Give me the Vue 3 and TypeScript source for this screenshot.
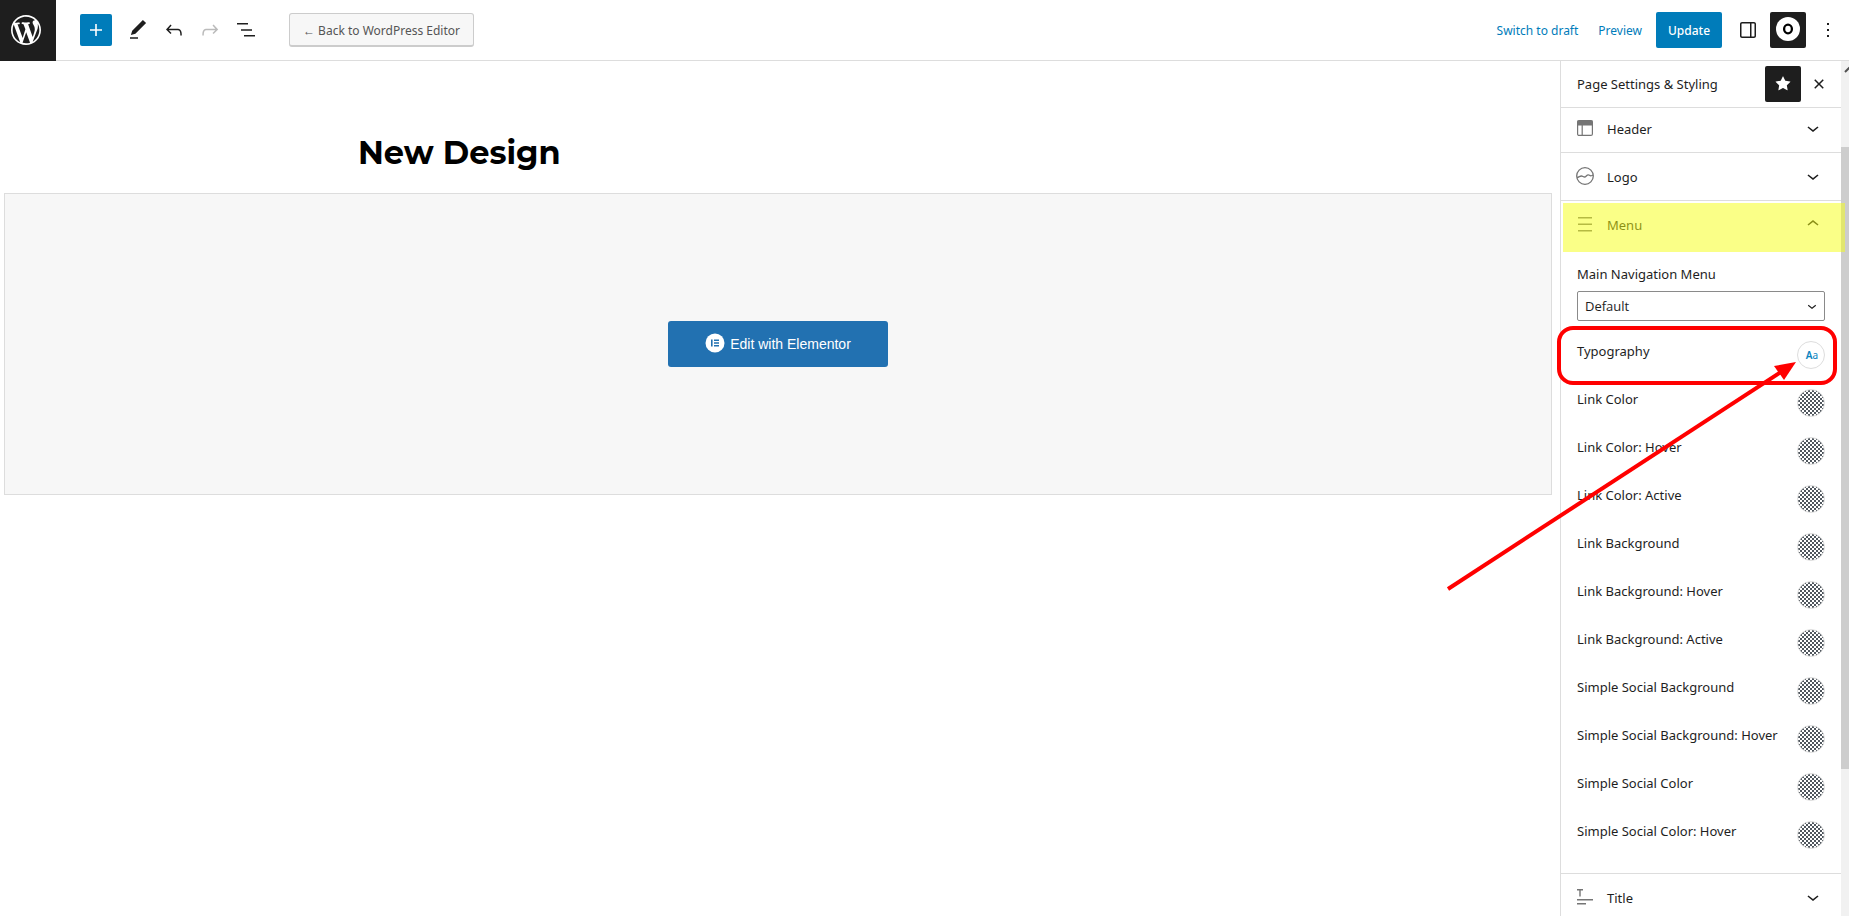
<script setup lang="ts">
interface ToolIcon {
  label: string
  path: string
  muted?: boolean
}

const tools: ToolIcon[] = [
  { label: 'Tools', path: 'M20.1 5.1L16.9 2 6.2 12.7l-1.3 4.4 4.5-1.3L20.1 5.1zM4 20.8h8v-1.5H4v1.5z' },
  { label: 'Undo', path: 'M18.3 11.7c-.6-.6-1.4-.9-2.3-.9H6.7l2.9-3.3-1.1-1-4.5 5L8.5 16l1-1-2.7-2.7H16c.5 0 .9.2 1.3.5 1 1 1 3.4 1 4.5v.3h1.5v-.2c0-1.5 0-4.3-1.5-5.7z' },
  { label: 'Redo', muted: true, path: 'M15.6 6.5l-1.1 1 2.9 3.3H8c-.9 0-1.7.3-2.3.9-1.4 1.5-1.4 4.2-1.4 5.6v.2h1.5v-.3c0-1.1 0-3.5 1-4.5.3-.3.7-.5 1.3-.5h9.2L14.5 15l1.1 1.1 4.6-4.6-4.6-5z' },
  { label: 'List view', path: 'M3 5h11v1.6H3V5Zm4 6.2h11v1.6H7v-1.6ZM21 17H10v1.6h11V17Z' },
]

const chevronDown = 'M17.5 11.6L12 16l-5.5-4.4.9-1.2L12 14l4.5-3.6 1 1.2z'
const chevronUp = 'M6.5 12.4L12 8l5.5 4.4-.9 1.2L12 10l-4.5 3.6-1-1.2z'

const colors: string[] = [
  'Link Color',
  'Link Color: Hover',
  'Link Color: Active',
  'Link Background',
  'Link Background: Hover',
  'Link Background: Active',
  'Simple Social Background',
  'Simple Social Background: Hover',
  'Simple Social Color',
  'Simple Social Color: Hover',
]
</script>

<template>
  <div class="app">
    <header class="topbar">
      <a class="wp" href="#" aria-label="View Pages">
        <svg width="36" height="36" viewBox="-2 -2 24 24"><path d="M20 10c0-5.51-4.49-10-10-10C4.48 0 0 4.49 0 10c0 5.52 4.48 10 10 10 5.51 0 10-4.48 10-10zM7.78 15.37L4.37 6.22c.55-.02 1.17-.08 1.17-.08.5-.06.44-1.13-.06-1.11 0 0-1.45.11-2.37.11-.18 0-.37 0-.58-.01C4.12 2.69 6.87 1.11 10 1.11c2.33 0 4.45.87 6.05 2.34-.68-.11-1.65.39-1.65 1.58 0 .74.45 1.36.9 2.1.35.61.55 1.36.55 2.46 0 1.49-1.4 5-1.4 5l-3.03-8.37c.54-.02.82-.17.82-.17.5-.05.44-1.25-.06-1.22 0 0-1.44.12-2.38.12-.87 0-2.33-.12-2.33-.12-.5-.03-.56 1.2-.06 1.22l.92.08 1.26 3.41zM17.41 10c.24-.64.74-1.87.43-4.25.7 1.29 1.05 2.71 1.05 4.25 0 3.29-1.73 6.24-4.4 7.78.97-2.59 1.94-5.2 2.92-7.78zM6.1 18.09C3.12 16.65 1.11 13.53 1.11 10c0-1.3.23-2.48.72-3.59C3.25 10.3 4.67 14.2 6.1 18.09zm4.03-6.63l2.58 6.98c-.86.29-1.76.45-2.71.45-.79 0-1.57-.11-2.29-.33.81-2.38 1.62-4.74 2.42-7.1z" /></svg>
      </a>
      <div class="tools">
        <button class="add" type="button" aria-label="Add block">
          <svg width="24" height="24" viewBox="0 0 24 24"><path d="M18 11.2h-5.2V6h-1.6v5.2H6v1.6h5.2V18h1.6v-5.2H18z" /></svg>
        </button>
        <button v-for="tool in tools" :key="tool.label" class="tool" :class="{ muted: tool.muted }" type="button" :aria-label="tool.label">
          <svg width="24" height="24" viewBox="0 0 24 24"><path :d="tool.path" /></svg>
        </button>
      </div>
      <button class="back" type="button">← Back to WordPress Editor</button>
      <div class="actions">
        <button class="link" type="button">Switch to draft</button>
        <button class="link" type="button">Preview</button>
        <button class="update" type="button">Update</button>
        <button class="square" type="button" aria-label="Settings">
          <svg width="24" height="24" viewBox="0 0 24 24"><path d="M18 4H6c-1.1 0-2 .9-2 2v12c0 1.1.9 2 2 2h12c1.1 0 2-.9 2-2V6c0-1.1-.9-2-2-2zm-4 14.5H6c-.3 0-.5-.2-.5-.5V6c0-.3.2-.5.5-.5h8v13zm4.5-.5c0 .3-.2.5-.5.5h-2.5v-13H18c.3 0 .5.2.5.5v12z" /></svg>
        </button>
        <button class="square dark" type="button" aria-label="Page Settings and Styling">
          <svg width="24" height="26" viewBox="0 0 24 26"><circle cx="12" cy="12" r="12" fill="#fff" /><ellipse cx="12" cy="12" rx="3.9" ry="4.3" fill="none" stroke="#000" stroke-width="2.3" /></svg>
        </button>
        <button class="more" type="button" aria-label="Options">
          <svg width="24" height="24" viewBox="0 0 24 24"><path d="M13 19h-2v-2h2v2zm0-6h-2v-2h2v2zm0-6h-2V5h2v2z" /></svg>
        </button>
      </div>
    </header>

    <div class="body">
      <main class="canvas">
        <h1 class="title">New Design</h1>
        <div class="block">
          <button class="elementor" type="button">
            <svg width="20" height="22" viewBox="0 0 20 22"><circle cx="10" cy="10" r="9.5" fill="#fff" /><path d="M6 6.4h1.6v7.2H6zM9 6.4h5v1.5H9zM9 9.2h5v1.5H9zM9 12.1h5v1.5H9z" fill="#2271b1" /></svg>
            <span>Edit with Elementor</span>
          </button>
        </div>
      </main>

      <aside class="sidebar">
        <div class="panel">
          <div class="panel-head">
            <strong>Page Settings &amp; Styling</strong>
            <button class="square dark" type="button" aria-label="Pinned">
              <svg width="18" height="18" viewBox="3 3 18 18"><path d="M11.776 4.454a.25.25 0 01.448 0l2.069 4.192a.25.25 0 00.188.137l4.626.672a.25.25 0 01.139.426l-3.348 3.263a.25.25 0 00-.072.222l.79 4.607a.25.25 0 01-.362.263l-4.138-2.175a.25.25 0 00-.232 0l-4.138 2.175a.25.25 0 01-.363-.263l.79-4.607a.25.25 0 00-.071-.222L4.754 9.881a.25.25 0 01.139-.426l4.626-.672a.25.25 0 00.188-.137l2.069-4.192z" /></svg>
            </button>
            <button class="close" type="button" aria-label="Close">
              <svg width="24" height="24" viewBox="0 0 24 24"><path d="M12 13.06l3.712 3.713 1.061-1.06L13.061 12l3.712-3.712-1.06-1.06L12 10.938 8.288 7.227l-1.061 1.06L10.939 12l-3.712 3.712 1.06 1.061L12 13.061z" /></svg>
            </button>
          </div>
          <div class="sections">
            <button class="section scrolled" type="button">
              <svg width="18" height="20" viewBox="0 0 18 20"><rect x="1.6" y="1.6" width="14.8" height="14.8" rx="1.5" fill="none" stroke="#757575" stroke-width="1.2" /><path d="M1.5 1.5h15v5h-15zM5.6 6h1.2v10H5.6z" fill="#757575" /></svg>
              <span>Header</span>
              <svg width="24" height="26" viewBox="0 0 24 26"><path :d="chevronDown" /></svg>
            </button>
            <button class="section" type="button">
              <svg width="18" height="20" viewBox="0 0 18 20"><g fill="none" stroke="#757575" stroke-width="1.3"><circle cx="9" cy="9" r="8.3" /><path d="M1 10.6c2-.4 3-1.6 4.4-1.6 1.4 0 1.8 1 3.2 1s2-2.2 3.6-2.2c1.2 0 1.4 1 2.6 1 .9 0 1.4-.5 2.2-.6" /></g></svg>
              <span>Logo</span>
              <svg width="24" height="26" viewBox="0 0 24 26"><path :d="chevronDown" /></svg>
            </button>
            <div class="open">
              <button class="section" type="button" aria-expanded="true">
                <svg width="18" height="20" viewBox="0 0 18 20"><path d="M2 2h14v1.5H2zM2 8.500h14V10H2zM2 15h14v1.500H2z" fill="#757575" /></svg>
                <span>Menu</span>
                <svg width="24" height="26" viewBox="0 0 24 26"><path :d="chevronUp" /></svg>
              </button>
              <div class="controls">
                <label for="main-menu">Main Navigation Menu</label>
                <div class="select">
                  <select id="main-menu"><option>Default</option></select>
                  <svg width="18" height="18" viewBox="0 0 24 24"><path :d="chevronDown" /></svg>
                </div>
                <div class="row">
                  <span id="typography">Typography</span>
                  <button class="swatch type" type="button" aria-labelledby="typography"><b>A</b>a</button>
                </div>
                <div v-for="(name, i) in colors" :key="name" class="row">
                  <span :id="`color-${i}`">{{ name }}</span>
                  <button class="swatch checker" type="button" :aria-labelledby="`color-${i}`"></button>
                </div>
              </div>
            </div>
            <button class="section" type="button">
              <svg width="18" height="20" viewBox="0 0 18 20"><path d="M1 1h6v1.5H4.700v6H3.300v-6H1zM1 11h16v1.500H1zM1 15h9v1.500H1z" fill="#757575" /></svg>
              <span>Title</span>
              <svg width="24" height="26" viewBox="0 0 24 26"><path :d="chevronDown" /></svg>
            </button>
          </div>
        </div>
        <div class="scrollbar">
          <svg width="8" height="14" viewBox="0 0 8 14"><path d="M4 11l4.500-4.500" fill="none" stroke="#505050" stroke-width="2" /></svg>
          <div class="thumb"></div>
        </div>

        <div class="highlight"></div>
        <svg class="arrow" width="352" height="232" viewBox="0 0 352 232">
          <path d="M2 229L338 10" stroke="#f00" stroke-width="4" />
          <path d="M350 2L328 6l10 14z" fill="#f00" />
        </svg>
        <div class="callout"></div>
      </aside>
    </div>
  </div>
</template>

<style>
body {
  margin: 0;
}
</style>

<style scoped>
.app {
  display: flex;
  flex-direction: column;
  height: 100vh;
  overflow: hidden;
  background: #fff;
  color: #1e1e1e;
  font: 13px/20px "Noto Sans", "Open Sans", sans-serif;
}
.app * {
  box-sizing: border-box;
}
button,
select {
  margin: 0;
  padding: 0;
  border: 0;
  background: none;
  color: inherit;
  font: inherit;
}
svg {
  display: block;
  flex: none;
  fill: currentColor;
}
.topbar {
  display: flex;
  flex: none;
  align-items: center;
  height: 61px;
  border-bottom: 1px solid #ddd;
  font-size: 12px;
}
.wp {
  display: flex;
  align-items: center;
  justify-content: center;
  width: 56px;
  height: 61px;
  padding-right: 4px;
  background: #1e1e1e;
  color: #fff;
}
.tools {
  display: flex;
  align-items: center;
  margin-left: 24px;
}
.add {
  display: flex;
  align-items: center;
  justify-content: center;
  width: 32px;
  height: 32px;
  margin-right: 8px;
  border-radius: 2px;
  background: #007cba;
  color: #fff;
}
.tool {
  display: flex;
  align-items: center;
  justify-content: center;
  width: 36px;
  height: 36px;
}
.muted {
  color: #bbb;
}
.back {
  min-width: 185px;
  height: 34px;
  margin-left: 25px;
  padding: 2px 12px 0;
  border: 1px solid #ccc;
  border-bottom-width: 2px;
  border-radius: 3px;
  background: #f7f7f7;
  color: #555;
}
.actions {
  display: flex;
  align-items: center;
  margin-left: auto;
}
.link {
  margin-right: 20px;
  padding-top: 2px;
  color: #007cba;
}
.link + .update {
  margin-left: -6px;
}
.update {
  min-width: 66px;
  height: 36px;
  margin-right: 8px;
  padding: 2px 10px 0;
  border-radius: 2px;
  background: #007cba;
  color: #fff;
  font-weight: 500;
}
.square {
  display: flex;
  align-items: center;
  justify-content: center;
  width: 36px;
  height: 36px;
  margin-right: 4px;
  border-radius: 2px;
}
.dark {
  background: #1e1e1e;
  color: #fff;
}
.more {
  width: 24px;
  height: 36px;
  margin: 0 9px 0 6px;
}
.body {
  display: flex;
  flex: 1;
  min-height: 0;
}
.canvas {
  flex: 1;
  min-width: 0;
  padding: 64px 8px 0 4px;
}
.title {
  max-width: 840px;
  margin: 0 auto;
  color: #000;
  font: 700 32px/56px Montserrat, Inter, sans-serif;
}
.block {
  display: flex;
  align-items: center;
  justify-content: center;
  height: 302px;
  margin-top: 12px;
  border: 1px solid #ddd;
  background: #f7f7f7;
}
.elementor {
  display: flex;
  align-items: center;
  justify-content: center;
  gap: 5px;
  height: 46px;
  padding: 0 37px;
  border-radius: 3px;
  background: #2271b1;
  color: #fff;
  font: 14px/20px "Liberation Sans", Arial, sans-serif;
}
.sidebar {
  position: relative;
  display: flex;
  flex: none;
  width: 289px;
  border-left: 1px solid #ddd;
}
.panel {
  display: flex;
  flex: 1;
  flex-direction: column;
  min-width: 0;
}
.panel-head {
  display: flex;
  flex: none;
  align-items: center;
  height: 47px;
  padding: 0 10px 0 16px;
  border-bottom: 1px solid #ddd;
}
.panel-head strong {
  flex: 1;
  font-weight: 400;
}
.close {
  width: 24px;
  margin-left: 2px;
}
.sections {
  flex: 1;
  min-height: 0;
  overflow: hidden;
}
.section {
  display: flex;
  align-items: center;
  gap: 13px;
  width: 100%;
  height: 48px;
  padding: 0 16px 0 15px;
  border-bottom: 1px solid #ddd;
  text-align: left;
}
.section span {
  flex: 1;
}
.scrolled {
  margin-top: -3px;
}
.open {
  border-bottom: 1px solid #ddd;
}
.open .section {
  border: 0;
}
.controls {
  padding: 15px 16px 4px;
}
.controls label {
  display: block;
  margin-bottom: 7px;
}
.select {
  display: flex;
  align-items: center;
  height: 30px;
  margin-bottom: 20px;
  padding-right: 3px;
  border: 1px solid #8a8a8a;
  border-radius: 2px;
  font-family: "Open Sans", "Noto Sans", sans-serif;
}
.select select {
  flex: 1;
  height: 28px;
  padding-left: 7px;
  appearance: none;
}
.row {
  display: flex;
  align-items: flex-start;
  justify-content: space-between;
  height: 48px;
}
.swatch {
  width: 28px;
  height: 28px;
  border: 1px solid #ddd;
  border-radius: 50%;
}
.type {
  padding-left: 2px;
  color: #0a84c0;
  font-size: 10px;
  line-height: 26px;
}
.type b {
  font-weight: 600;
}
.checker {
  background: repeating-conic-gradient(#50575e 0 25%, #fff 0 50%) 0 0 / 4px 4px;
}
.scrollbar {
  width: 8px;
  background: #f1f1f1;
}
.thumb {
  height: 622px;
  margin-top: 72px;
  background: #cdcdcd;
}
.highlight {
  position: absolute;
  top: 142px;
  right: 4px;
  width: 282px;
  height: 49px;
  background: rgba(245, 255, 15, 0.5);
}
.callout {
  position: absolute;
  top: 265px;
  right: 12px;
  width: 280px;
  height: 59px;
  border: 4px solid #f00;
  border-radius: 16px;
}
.arrow {
  position: absolute;
  top: 299px;
  right: 51px;
}
</style>
